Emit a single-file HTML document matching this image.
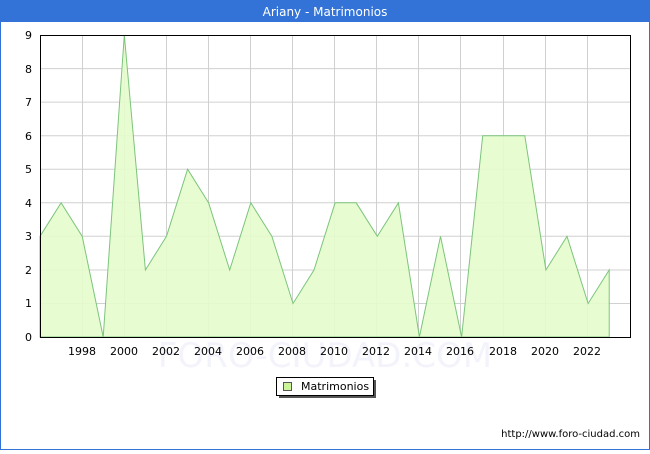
<!DOCTYPE html>
<html><head><style>
body{margin:0;width:650px;height:450px;overflow:hidden;background:#fff;font-family:"DejaVu Sans","Liberation Sans",sans-serif}
</style></head><body>
<svg width="650" height="450" xmlns="http://www.w3.org/2000/svg" font-family="DejaVu Sans, Liberation Sans, sans-serif">
<rect x="0.5" y="0.5" width="649" height="449" fill="#fff" stroke="#3373d8"/>
<rect x="0" y="0" width="650" height="22" fill="#3373d8"/>
<text x="325" y="16" text-anchor="middle" fill="#fff" font-size="12">Ariany - Matrimonios</text>
<g stroke="#d0d0d0" stroke-width="1">
<line x1="40" y1="303.5" x2="630" y2="303.5"/><line x1="40" y1="270" x2="630" y2="270"/>
<line x1="40" y1="236.3" x2="630" y2="236.3"/><line x1="40" y1="202.8" x2="630" y2="202.8"/>
<line x1="40" y1="169.2" x2="630" y2="169.2"/><line x1="40" y1="135.7" x2="630" y2="135.7"/>
<line x1="40" y1="102.1" x2="630" y2="102.1"/><line x1="40" y1="68.6" x2="630" y2="68.6"/>
<line x1="82.5" y1="35" x2="82.5" y2="337"/><line x1="124.5" y1="35" x2="124.5" y2="337"/>
<line x1="166.5" y1="35" x2="166.5" y2="337"/><line x1="208.5" y1="35" x2="208.5" y2="337"/>
<line x1="250.5" y1="35" x2="250.5" y2="337"/><line x1="292.5" y1="35" x2="292.5" y2="337"/>
<line x1="334.5" y1="35" x2="334.5" y2="337"/><line x1="376.5" y1="35" x2="376.5" y2="337"/>
<line x1="418.5" y1="35" x2="418.5" y2="337"/><line x1="460.5" y1="35" x2="460.5" y2="337"/>
<line x1="503.5" y1="35" x2="503.5" y2="337"/><line x1="545.5" y1="35" x2="545.5" y2="337"/>
<line x1="587.5" y1="35" x2="587.5" y2="337"/>
</g>
<text x="325" y="367" text-anchor="middle" font-size="34" fill="#f3f3fb">FORO-CIUDAD.COM</text>
<polygon fill="#e4fdcc" fill-opacity="0.9" stroke="#7cc47c" stroke-width="1" points="40,337 40,236.3 61.1,202.8 82.2,236.3 103.2,337 124.3,35 145.4,270 166.5,236.3 187.6,169.2 208.6,202.8 229.7,270 250.8,202.8 271.9,236.3 293,303.5 314,270 335.1,202.8 356.2,202.8 377.3,236.3 398.4,202.8 419.4,337 440.5,236.3 461.6,337 482.7,135.7 503.8,135.7 524.8,135.7 545.9,270 567,236.3 588.1,303.5 609.2,270 609.2,337"/>
<rect x="40.5" y="35.5" width="590" height="302" fill="none" stroke="#000"/>
<g font-size="11" fill="#000" text-anchor="end">
<text x="32" y="341">0</text><text x="32" y="307">1</text><text x="32" y="274">2</text>
<text x="32" y="240">3</text><text x="32" y="207">4</text><text x="32" y="173">5</text>
<text x="32" y="140">6</text><text x="32" y="106">7</text><text x="32" y="73">8</text><text x="32" y="39">9</text>
</g>
<g font-size="11" fill="#000" text-anchor="middle">
<text x="82" y="355">1998</text><text x="124" y="355">2000</text><text x="166" y="355">2002</text>
<text x="208" y="355">2004</text><text x="250" y="355">2006</text><text x="292" y="355">2008</text>
<text x="334" y="355">2010</text><text x="376" y="355">2012</text><text x="418" y="355">2014</text>
<text x="460" y="355">2016</text><text x="503" y="355">2018</text><text x="545" y="355">2020</text>
<text x="587" y="355">2022</text>
</g>
<rect x="279" y="380" width="97" height="18" fill="#555"/>
<rect x="276.5" y="377.5" width="97" height="18" fill="#fff" stroke="#000"/>
<rect x="283.5" y="382.5" width="8" height="8" fill="#ccf59a" stroke="#555"/>
<text x="301" y="390" font-size="11">Matrimonios</text>
<text x="640" y="437" text-anchor="end" font-size="10">http://www.foro-ciudad.com</text>
</svg>
</body></html>
